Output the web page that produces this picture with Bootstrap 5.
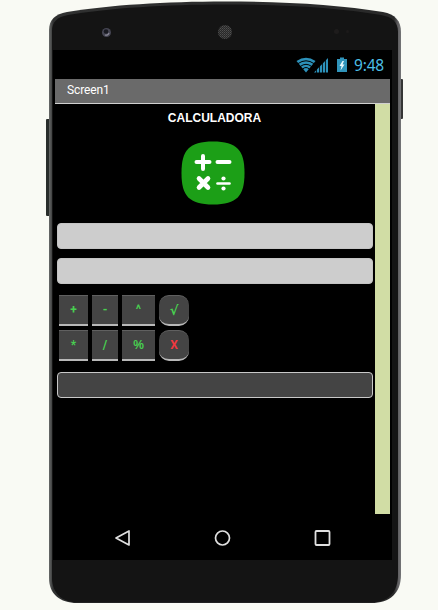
<!DOCTYPE html>
<html lang="es">
<head>
<meta charset="utf-8">
<meta name="viewport" content="width=device-width, initial-scale=1">
<title>Calculadora</title>
<link href="https://cdn.jsdelivr.net/npm/bootstrap@5.3.0/dist/css/bootstrap.min.css" rel="stylesheet">
<style>
body{background:#f9faf4;width:438px;height:610px;font-family:Roboto,sans-serif}
.shell{position:absolute;left:0;top:0}
.device{width:339px;height:510px;margin:50px 0 0 53px;background:#000;position:relative;padding:0 2px}
.status{height:29px;padding-right:6px}
.clock{font:15.5px/30px "Noto Sans",sans-serif;color:#4cbfe6;margin-left:6px;letter-spacing:-.2px}
.titlebar{height:25px;background:#6a6a6a;border-bottom:1px solid #d0d0d0;color:#fff;font-size:12px;line-height:22px;padding-left:12px;letter-spacing:-.1px}
.stage{height:410px}
.gutter{width:15px;background:#d1dda5}
.heading{font:bold 12px/14px "Liberation Sans",sans-serif;color:#fff;margin:7px 0 0 -1px;font-kerning:none}
.logo{width:64px;height:64px;margin:16px 0 0 -4px}
.entry{height:26px;min-height:0;border-radius:4px;border:1px solid #c4c4c4;background:#cdcdcd;width:316px;padding:0 6px;margin:9px 0 0 2px}
.logo + .entry{margin-top:18px}
.result{background:#444;border-color:#c8c8c8;margin-top:11px}
.keys{display:grid;grid-template-columns:29px 26px 33px 30px;column-gap:4px;row-gap:4px;margin:11px 0 0 4px}
.key{height:31px;padding:1px 0 0;border:0;border-top:1px solid #606060;border-bottom:2px solid #b8b8b8;border-radius:0;background:#444;color:#48d050;font:bold 12px/27px Roboto,sans-serif}
.key:hover{background:#4c4c4c;color:#48d050}
.key-round{border-radius:10px}
.key-wide{font-family:"Liberation Sans",sans-serif}
.key-root{font-family:"DejaVu Sans",sans-serif;font-size:13px}
.key-clear{color:#f03840}
.sysnav{height:46px;padding:1px 59px 0}
</style>
<script src="https://cdn.jsdelivr.net/npm/bootstrap@5.3.0/dist/js/bootstrap.bundle.min.js"></script>
</head>
<body class="m-0 overflow-hidden d-flex align-items-start">
<!-- Phone casing with side buttons, camera and earpiece -->
<svg class="shell" width="438" height="610" viewBox="0 0 438 610" aria-hidden="true">
<defs>
<linearGradient id="rim" x1="0" x2="1"><stop offset="0" stop-color="#686a69"/><stop offset=".012" stop-color="#303131"/><stop offset=".98" stop-color="#292929"/><stop offset=".99" stop-color="#5b5a5c"/><stop offset="1" stop-color="#747577"/></linearGradient>
<pattern id="mesh" width="2" height="2" patternUnits="userSpaceOnUse"><rect width="2" height="2" fill="#282828"/><rect width="1" height="1" fill="#505050"/><rect x="1" y="1" width="1" height="1" fill="#404040"/></pattern>
</defs>
<rect x="46" y="119" width="5" height="97" rx="1" fill="#292d2b"/>
<rect x="399" y="79" width="4" height="40" rx="1" fill="#353535"/>
<path d="M49 30C49 20 55 14 67 12C110 5 165 1.500 225 1.500S340 5 383 12C395 14 401 21 401 32V575C401 593 390 603 371 603H77C60 603 49 594 49 578Z" fill="url(#rim)"/>
<path d="M52 31C52 22 57 17 68 15C110 8 165 4.500 225 4.500S340 8 381 15C392 17 398 22 398 32V575C398 591 389 602.500 371 602.500H78C62 602.500 52 593 52 578Z" fill="#141414"/>
<circle cx="106.500" cy="32.500" r="4.500" fill="#464653"/><circle cx="106" cy="31.500" r="2.300" fill="#191a21"/><path d="M105 35a3 3 0 0 0 4-2" stroke="#8b8997" stroke-width="1.200" fill="none"/>
<circle cx="225" cy="32" r="7" fill="url(#mesh)"/>
<circle cx="336.500" cy="31.500" r="2.500" fill="#1e1c1c"/><circle cx="347.500" cy="31.500" r="1.500" fill="#1c1a1a"/>
</svg>

<main class="device">
<div class="status d-flex justify-content-end align-items-center">
<svg width="52" height="18" viewBox="0 0 52 18" aria-hidden="true">
<path d="M.5 5Q10 -1.500 19.500 5L10 16.500Z" fill="#2c91ba"/>
<path d="M2 7.600Q10 2 18 7.600M4.200 10.600Q10 6 15.800 10.600M6.400 13.200Q10 9.800 13.600 13.200" fill="none" stroke="#000" stroke-width="1"/>
<path d="M18 16.500L32 2V16.500Z" fill="#2c91ba"/>
<path d="M20.500 2v15M23.500 2v15M26.500 2v15M29.500 2v15" stroke="#000" stroke-width=".8"/>
<path d="M41 3h3V1.500h4V3h3v13H41Z" fill="#3094bb"/>
<path d="M46.500 5L43.500 10h2l-1 4.500 4-6h-2l1.500-3.500z" fill="#e8faff"/>
</svg>
<span class="clock">9:48</span>
</div>
<div class="titlebar">Screen1</div>
<div class="stage d-flex">
<section class="flex-grow-1 d-flex flex-column">
<h1 class="heading align-self-center">CALCULADORA</h1>
<svg class="logo align-self-center" viewBox="0 0 64 64" role="img" aria-label="Calculadora">
<path d="M32 .5C56 .5 63.500 9 63.500 32S56 63.500 32 63.500.5 55 .5 32 8 .5 32 .5Z" fill="#1c9f17"/>
<g stroke="#fff" stroke-width="4" stroke-linecap="round"><path d="M15.500 21h13M22 15v13M36.500 21h12"/><path d="M18 37.500l9 9m0-9l-9 9" stroke-width="4.600"/><path d="M36.500 42.500h12" stroke-width="2.600"/></g>
<circle cx="42.500" cy="37.500" r="2.100" fill="#fff"/><circle cx="42.500" cy="47.500" r="2.100" fill="#fff"/>
</svg>
<input class="entry form-control" aria-label="Número 1">
<input class="entry form-control" aria-label="Número 2">
<div class="keys">
<button class="btn key">+</button><button class="btn key">-</button><button class="btn key">^</button><button class="btn key key-round key-root">√</button>
<button class="btn key">*</button><button class="btn key">/</button><button class="btn key key-wide">%</button><button class="btn key key-round key-clear">X</button>
</div>
<output class="entry result d-block"></output>
</section>
<div class="gutter flex-shrink-0"></div>
</div>
<nav class="sysnav d-flex justify-content-between align-items-center" aria-label="Sistema">
<svg width="17" height="18" viewBox="0 0 17 18"><path d="M15 2v14L2 9Z" fill="none" stroke="#e0e0e0" stroke-width="1.700" stroke-linejoin="round"/></svg>
<svg width="17" height="18" viewBox="0 0 17 18"><circle cx="8.500" cy="9" r="7" fill="none" stroke="#e0e0e0" stroke-width="1.700"/></svg>
<svg width="17" height="18" viewBox="0 0 17 18"><rect x="1.500" y="2" width="14" height="14" rx="1" fill="none" stroke="#e0e0e0" stroke-width="1.800"/></svg>
</nav>
</main>
</body>
</html>
